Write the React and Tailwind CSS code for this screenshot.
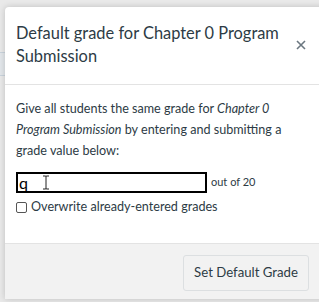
export default function App() {
  return (
    <div className="w-[319px] h-[302px] overflow-hidden bg-[#e9e9e9] relative" style={{ fontFamily: "Lato, 'Noto Sans', sans-serif" }}>
      <div className="absolute left-0 top-[52px] w-[6px] h-[24px] border-y border-[#c9d3dc] bg-[#e2e6ea]"></div>
      <div className="absolute left-[5px] top-[7px] w-[330px] h-[292px] bg-white rounded-tl-[4px] shadow-[0_0_6px_rgba(0,0,0,0.18)] flex flex-col">
        <div className="h-[78px] shrink-0 border-b border-[#e3e3e3] pl-[11px] pt-[14px] relative">
          <h2 className="text-[16.4px] leading-[23px] text-[#2d3b45] font-normal w-[300px] whitespace-nowrap">Default grade for Chapter 0 Program<br />Submission</h2>
          <button className="absolute left-[291px] top-[33px]">
            <svg width="10" height="10" viewBox="0 0 10 10"><path d="M1 1L9 9M9 1L1 9" stroke="#6b7780" strokeWidth="1.6" /></svg>
          </button>
        </div>
        <div className="h-[159px] shrink-0 border-b border-[#e3e3e3] pl-[11px] pt-[13px] text-[#2d3b45]">
          <p className="text-[12.6px] leading-[21px] w-[282px]">Give all students the same grade for <i>Chapter 0 Program Submission</i> by entering and submitting a grade value below:</p>
          <div className="flex items-center mt-[11px]">
            <div className="w-[191px] h-[21px] border-2 border-black flex items-center pl-[1px] text-[16px] leading-none text-black">
              <span>q</span>
              <svg className="ml-[14px]" width="8" height="15" viewBox="0 0 8 15"><path d="M1 1H3.5Q4 1 4 2V13Q4 14 3.5 14H1M7 1H4.5Q4 1 4 2M4 13Q4 14 4.5 14H7" stroke="#222" strokeWidth="1" fill="none" /></svg>
            </div>
            <span className="ml-[4px] text-[11px] text-[#2d3b45]">out of 20</span>
          </div>
          <label className="flex items-center mt-[5px] text-[12.6px]">
            <span className="w-[11px] h-[11px] border border-[#555] rounded-[2px] bg-white"></span>
            <span className="ml-[4px]">Overwrite already-entered grades</span>
          </label>
        </div>
        <div className="flex-1 bg-[#f2f2f2] pl-[178px] pt-[11px]">
          <button className="w-[126px] h-[36px] bg-[#f2f2f2] border border-[#dcdfe1] rounded-[3px] text-[13.2px] text-[#2d3b45]">Set Default Grade</button>
        </div>
      </div>
    </div>
  );
}
